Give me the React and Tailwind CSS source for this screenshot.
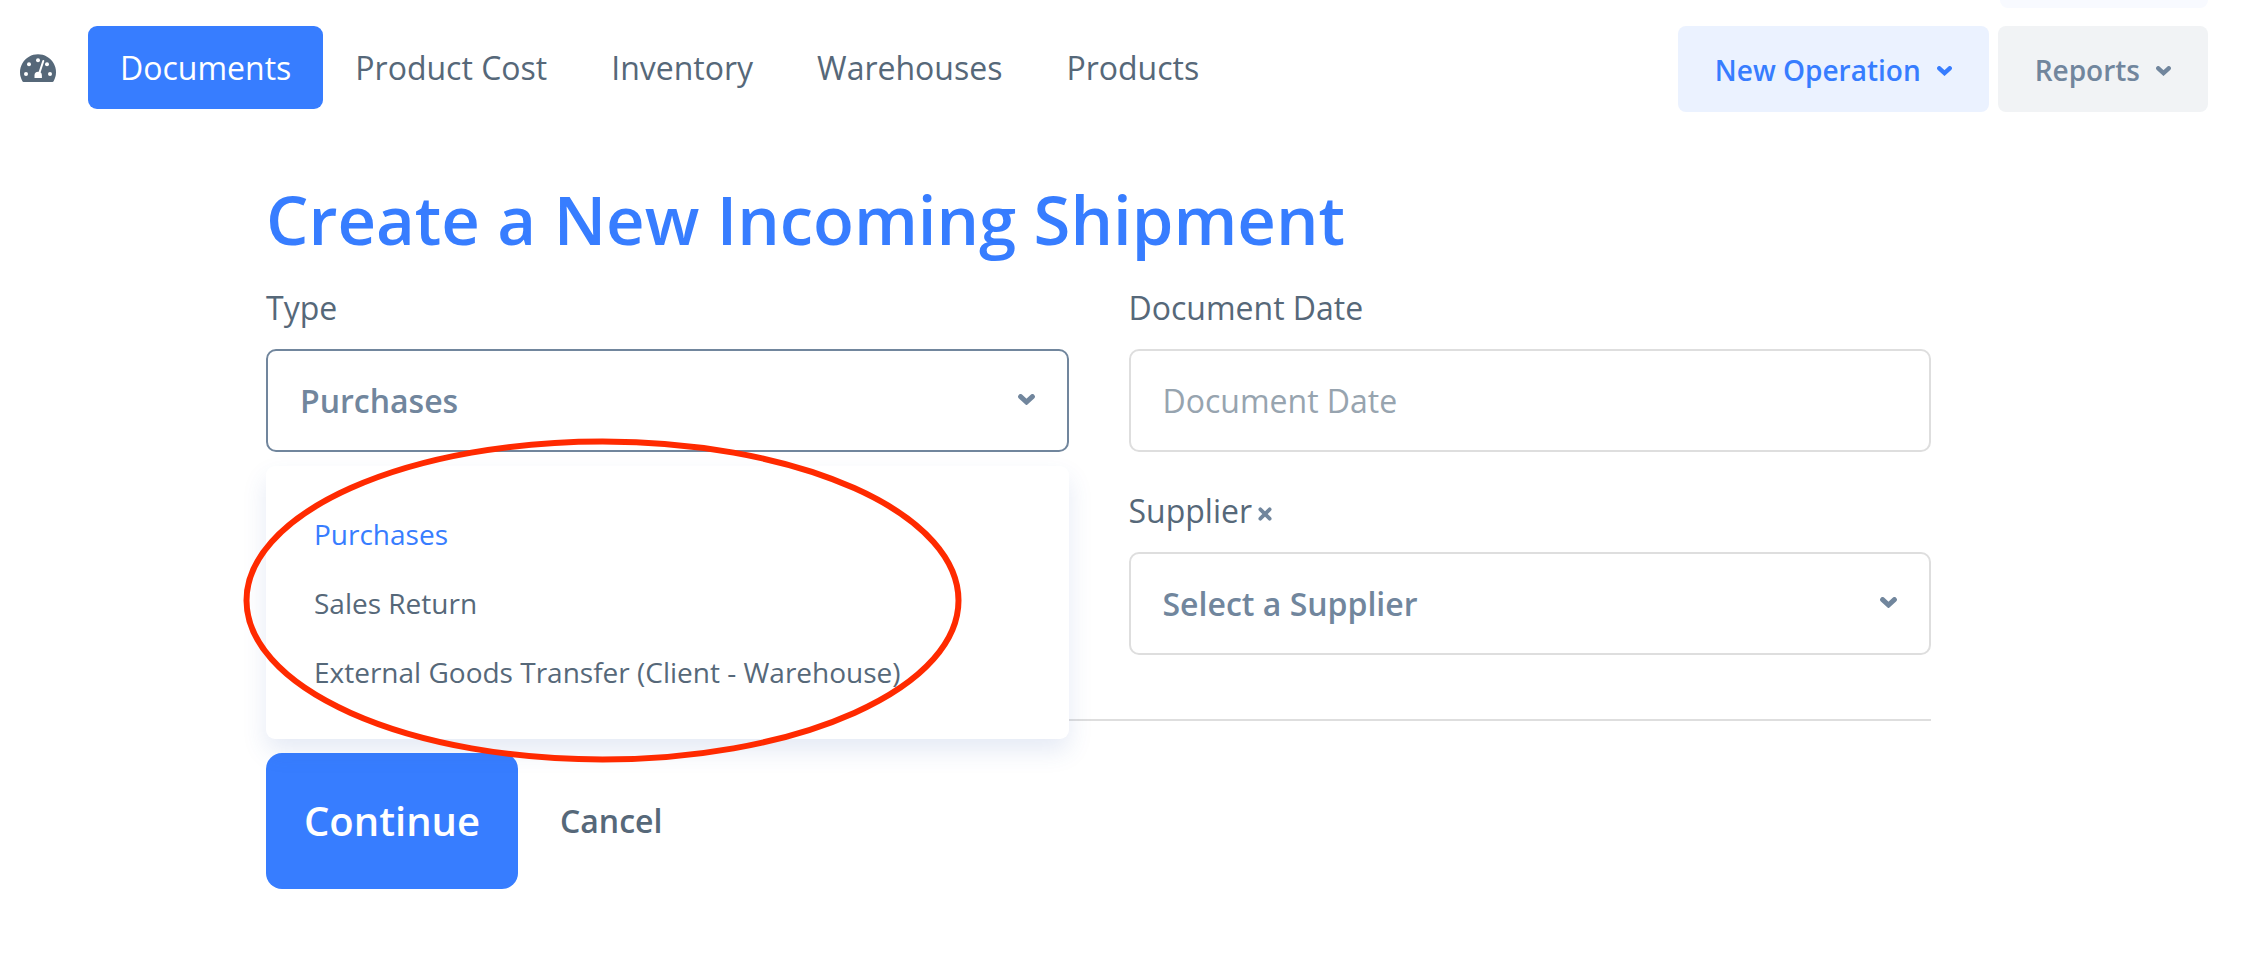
import React, { useState } from 'react';

const navItems = ['Documents', 'Product Cost', 'Inventory', 'Warehouses', 'Products'];
const shipmentTypes = ['Purchases', 'Sales Return', 'External Goods Transfer (Client - Warehouse)'];

const Chevron = ({ className }) => <svg className={className} viewBox="0 0 17 11" fill="none" stroke="currentColor" strokeWidth="5" strokeLinecap="round" aria-hidden="true">
    <path d="M2.6 2.6L8.5 8L14.4 2.6" />
  </svg>;

const GaugeIcon = ({ className }) => <svg className={className} viewBox="0 0 36 28" aria-hidden="true">
    <path fill="currentColor" d="M3.6 28Q2.8 28 2.4 27.2A18 18 0 1 1 33.6 27.2Q33.2 28 32.4 28Z" />
    <g fill="#fff">
      <circle cx="9" cy="10.3" r="2" />
      <circle cx="18" cy="6.2" r="2" />
      <circle cx="27" cy="10.3" r="2" />
      <circle cx="6" cy="20" r="2" />
      <circle cx="30" cy="20" r="2" />
      <path d="M14.5 24V21.5A3.7 3.7 0 0 1 21.9 21.5V24Z" />
    </g>
    <path d="M23.3 7L19 20" stroke="#fff" strokeWidth="2" strokeLinecap="round" />
  </svg>;

const Header = () => <header className="flex flex-col pr-[38px] pl-5">
    <div className="h-2 w-[208px] self-end rounded-b-lg bg-[#f8faff]" />
    <div className="mt-[18px] flex items-start justify-between">
      <nav className="flex items-center">
        <a href="#dashboard" aria-label="Dashboard" className="mr-8 text-[#566879]">
          <GaugeIcon className="h-7 w-9" />
        </a>
        {navItems.map((item, i) => <a key={item} href="#" className={i === 0 ? 'rounded-[9px] bg-[#377dff] px-8 text-[32px] leading-[83px] text-white' : 'px-8 text-[32px] leading-[83px] text-[#566879]'}>
            {item}
          </a>)}
      </nav>
      <div className="flex gap-[9px]">
        <button className="flex h-[86px] items-center gap-4 rounded-lg bg-[#ebf2ff] px-[37px] pt-0.5 text-[28px] font-semibold text-[#377dff]">
          New Operation
          <Chevron className="mt-0.5 w-[15px]" />
        </button>
        <button className="flex h-[86px] items-center gap-4 rounded-lg bg-[#f1f3f5] px-[37px] pt-0.5 text-[28px] font-semibold text-[#71869d]">
          Reports
          <Chevron className="mt-0.5 w-[15px]" />
        </button>
      </div>
    </div>
  </header>;

const TypeField = () => {
  const [type, setType] = useState('Purchases');
  return <div className="relative">
      <label htmlFor="type" className="block text-[32px] leading-[48px] text-[#566879]">Type</label>
      <div className="relative mt-[17px]">
        <select id="type" value={type} onChange={e => setType(e.target.value)} className="h-[103px] w-full appearance-none rounded-[10px] border-2 border-[#71869d] bg-white px-8 text-[32px] font-semibold text-[#71869d] outline-none">
          {shipmentTypes.map(t => <option key={t}>{t}</option>)}
        </select>
        <Chevron className="pointer-events-none absolute top-[45px] right-[34px] w-[17px] text-[#71869d]" />
      </div>
      {/* Open list of shipment types */}
      <ul role="listbox" aria-label="Type" className="absolute top-full right-0 left-0 z-10 mt-[14px] rounded-[9px] bg-white pt-[34px] pb-8 shadow-[0_12px_24px_rgba(55,90,180,0.13)]">
        {shipmentTypes.map(t => <li key={t} role="option" aria-selected={t === type} onClick={() => setType(t)} className={t === type ? 'cursor-pointer px-12 text-[28px] leading-[69px] text-[#377dff]' : 'cursor-pointer px-12 text-[28px] leading-[69px] text-[#566879]'}>
            {t}
          </li>)}
      </ul>
      {/* Highlight around the list */}
      <svg className="pointer-events-none absolute top-[154px] -left-[23px] z-20 h-[325px] w-[719px]" viewBox="0 0 719 325" fill="none" aria-hidden="true">
        <ellipse cx="359.5" cy="162.5" rx="356" ry="159" stroke="#ff2a00" strokeWidth="6" />
      </svg>
    </div>;
};

const App = () => {
  return <div className="bg-white font-['Open_Sans',sans-serif]">
      <Header />
      <main className="pt-[67px] pr-[315px] pb-[77px] pl-[266px]">
        <h1 className="text-[67px] leading-[80px] font-semibold text-[#377dff]">Create a New Incoming Shipment</h1>
        <form onSubmit={e => e.preventDefault()}>
          <div className="mt-[25px] grid grid-cols-2 gap-x-[60px] gap-y-[35px]">
            <TypeField />
            <div>
              <label htmlFor="date" className="block text-[32px] leading-[48px] text-[#566879]">Document Date</label>
              <input id="date" type="text" placeholder="Document Date" className="mt-[17px] h-[103px] w-full rounded-[10px] border-2 border-[#dedede] px-8 text-[32px] text-[#566879] placeholder:text-[#97a4af]" />
            </div>
            <div className="col-start-2">
              <div className="flex items-center">
                <label htmlFor="supplier" className="text-[32px] leading-[48px] text-[#566879]">Supplier</label>
                <button type="button" aria-label="Clear supplier" className="mt-1.5 ml-1.5 text-[#71869d]">
                  <svg className="w-3.5" viewBox="0 0 15 15" fill="none" stroke="currentColor" strokeWidth="4" strokeLinecap="round">
                    <path d="M2.5 2.5L12.5 12.5M12.5 2.5L2.5 12.5" />
                  </svg>
                </button>
              </div>
              <div className="relative mt-[17px]">
                <select id="supplier" className="h-[103px] w-full appearance-none rounded-[10px] border-2 border-[#dedede] bg-white px-8 text-[32px] font-semibold text-[#71869d]">
                  <option>Select a Supplier</option>
                </select>
                <Chevron className="pointer-events-none absolute top-[45px] right-[34px] w-[17px] text-[#71869d]" />
              </div>
            </div>
          </div>
          <hr className="mt-16 border-t-2 border-[#dedede]" />
          <div className="mt-8 flex items-center gap-[42px]">
            <button type="submit" className="h-[136px] rounded-2xl bg-[#377dff] px-[38px] text-[40px] font-semibold text-white">Continue</button>
            <a href="#" className="text-[32px] font-semibold text-[#566879]">Cancel</a>
          </div>
        </form>
      </main>
    </div>;
};
export default App;
